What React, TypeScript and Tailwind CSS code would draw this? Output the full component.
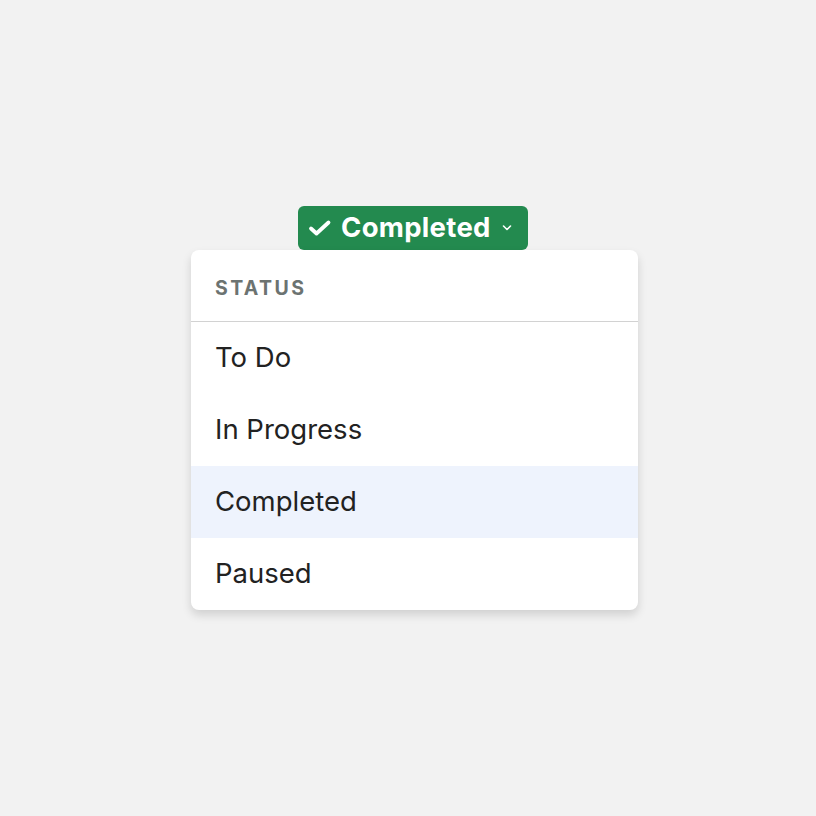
import React from "react";

export default function App() {
  const items = ["To Do", "In Progress", "Completed", "Paused"];
  return (
    <div
      className="w-[816px] h-[816px] bg-[#f2f2f2] flex flex-col"
      style={{ fontFamily: "Inter, 'Noto Sans', sans-serif" }}
    >
      <div className="mt-[206px] ml-[191px] w-[447px] flex flex-col items-center">
        <div className="ml-[-3px] h-[44px] w-[230px] rounded-[6px] bg-[#238a4f] text-white flex items-center">
          <svg width="24" height="18" viewBox="0 0 24 18" className="shrink-0 ml-[10px]">
            <path d="M3 9.5 L8.5 14.5 L20.5 3.5" fill="none" stroke="white" strokeWidth="3.8" strokeLinecap="round" strokeLinejoin="round" />
          </svg>
          <span className="ml-[9px] text-[27.5px] font-bold leading-none tracking-[0.3px]">Completed</span>
          <svg width="12" height="8" viewBox="0 0 12 8" className="ml-[10px] shrink-0">
            <path d="M2.5 2 L6 5.5 L9.5 2" fill="none" stroke="white" strokeWidth="1.6" strokeLinecap="round" strokeLinejoin="round" />
          </svg>
        </div>
        <div className="w-[447px] bg-white rounded-[8px] shadow-[0_5px_10px_rgba(0,0,0,0.14)] overflow-hidden">
          <div className="h-[72px] flex items-center pl-[24px] pt-[6px] border-b border-[#d2d2d2]">
            <span className="text-[19.5px] font-bold tracking-[2.4px] text-[#6c7371]">STATUS</span>
          </div>
          {items.map((it) => (
            <div
              key={it}
              className={`h-[72px] flex items-center pl-[24px] text-[27.5px] text-[#222222] ${it === "Completed" ? "bg-[#eef3fd]" : ""}`}
            >
              {it}
            </div>
          ))}
        </div>
      </div>
    </div>
  );
}
